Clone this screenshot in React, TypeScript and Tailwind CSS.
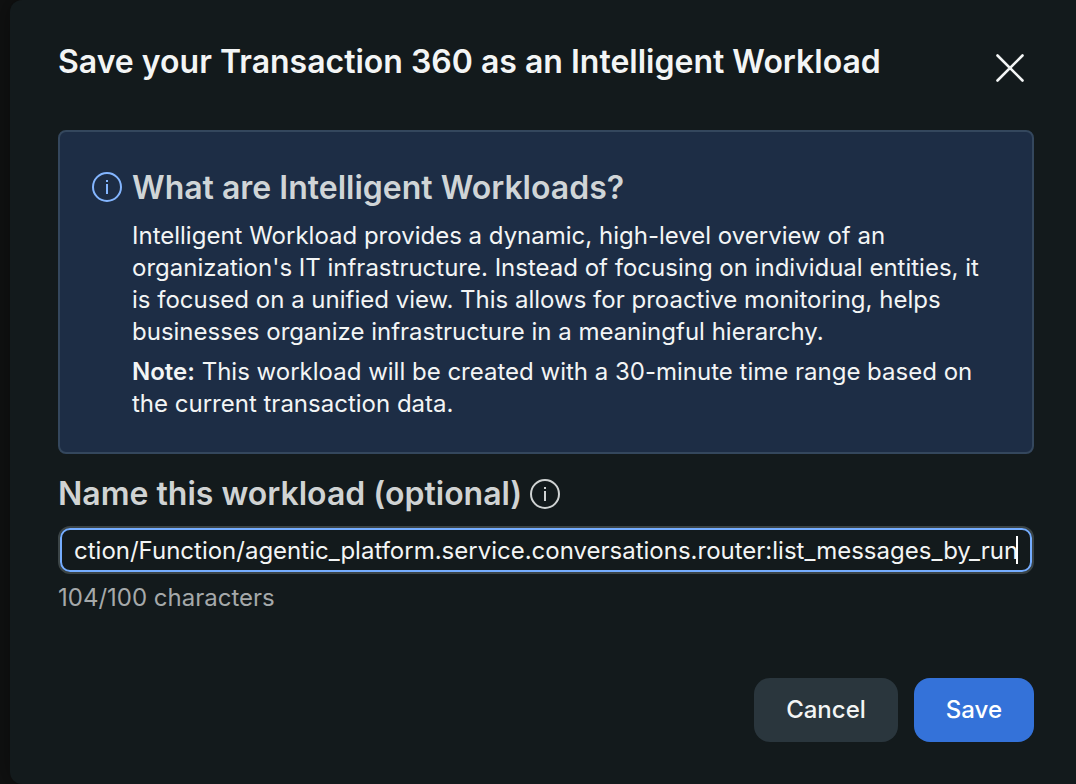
import { useState } from 'react';

function InfoIcon({ className }: { className?: string }) {
  return (
    <svg className={className} viewBox="0 0 30 30" fill="none" stroke="currentColor" strokeWidth="2" aria-hidden="true">
      <circle cx="15" cy="15" r="14" />
      <path d="M15 12v10M15 8v2" />
    </svg>
  );
}

function CloseIcon() {
  return (
    <svg className="h-7 w-7" viewBox="0 0 28 28" fill="none" stroke="currentColor" strokeWidth="2.6" strokeLinecap="round" aria-hidden="true">
      <path d="M1.5 1.5l25 25M26.5 1.5l-25 25" />
    </svg>
  );
}

export default function App() {
  const [name, setName] = useState(
    'ction/Function/agentic_platform.service.conversations.router:list_messages_by_run'
  );

  return (
    <div className="min-h-screen overflow-hidden bg-[#101111] pl-[10px] font-['Inter',sans-serif] text-[#f3f5f5]">
      <main className="min-h-screen rounded-l-xl bg-[#131a1c] pt-10 pr-[42px] pb-[42px] pl-12 shadow-[0_0_24px_rgba(0,0,0,0.4)]">
        {/* Header */}
        <header className="flex items-start justify-between">
          <h1 className="text-[32px] leading-[44px] font-semibold">
            Save your Transaction 360 as an Intelligent Workload
          </h1>
          <button type="button" aria-label="Close" className="flex h-14 w-12 items-center justify-center">
            <CloseIcon />
          </button>
        </header>

        {/* Info banner */}
        <section className="mt-[34px] flex gap-[10px] rounded-lg border-2 border-[#34475d] bg-[#1d2d45] px-8 pt-9 pb-8">
          <InfoIcon className="mt-1 h-[30px] w-[30px] shrink-0 text-[#84b6ff]" />
          <div className="text-2xl leading-8">
            <h2 className="text-[32px] leading-10 font-semibold text-[#d0d5d7]">What are Intelligent Workloads?</h2>
            <p className="mt-3">
              Intelligent Workload provides a dynamic, high-level overview of an organization's IT infrastructure.
              Instead of focusing on individual entities, it is focused on a unified view. This allows for proactive
              monitoring, helps businesses organize infrastructure in a meaningful hierarchy.
            </p>
            <p className="mt-2">
              <strong className="font-semibold">Note:</strong> This workload will be created with a 30-minute time
              range based on the current transaction data.
            </p>
          </div>
        </section>

        {/* Workload name */}
        <div className="mt-5 flex items-center gap-2 text-[#d0d3d3]">
          <label htmlFor="workload-name" className="text-[32px] leading-10 font-semibold">
            Name this workload (optional)
          </label>
          <InfoIcon className="h-[30px] w-[30px]" />
        </div>
        <div className="relative mt-3 rounded-xl border-2 border-[#3b4446]">
          <input
            id="workload-name"
            type="text"
            value={name}
            onChange={(e) => setName(e.target.value)}
            aria-describedby="workload-count"
            className="block h-11 w-full rounded-[10px] border-2 border-[#75adff] bg-transparent px-3 text-2xl outline-none"
          />
          <span className="absolute top-2 right-[14px] h-7 w-0.5 bg-white" />
        </div>
        <p id="workload-count" className="mt-2 text-2xl leading-8 text-[#a5a9aa]">
          104/100 characters
        </p>

        {/* Actions */}
        <footer className="mt-16 flex justify-end gap-4 text-2xl font-medium">
          <button type="button" className="h-16 rounded-2xl bg-[#2a363d] px-8">
            Cancel
          </button>
          <button type="button" className="h-16 rounded-2xl bg-[#3472d9] px-8 text-white">
            Save
          </button>
        </footer>
      </main>
    </div>
  );
}
